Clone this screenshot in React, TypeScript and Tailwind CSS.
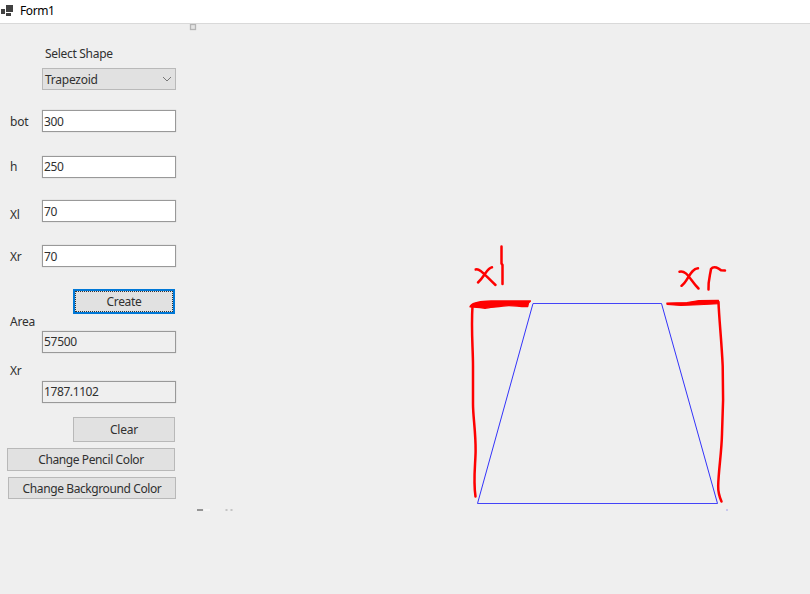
import type { ReactNode } from 'react';

const fieldBase =
  'flex h-[22px] w-[134px] items-center border border-[#999] pl-[1px] shadow-[0_0_1px_#bbb]';

function Label({ children, className = '' }: { children: ReactNode; className?: string }) {
  return <span className={`block h-4 leading-4 whitespace-nowrap ${className}`}>{children}</span>;
}

function Row({ label, value, className, labelClass = '', valueClass = '' }: { label: string; value: string; className: string; labelClass?: string; valueClass?: string }) {
  return (
    <div className={`flex h-[22px] items-center ${className}`}>
      <Label className={`w-[32px] tracking-[-0.2px] ${labelClass}`}>{label}</Label>
      <div className={`${fieldBase} bg-white`}>
        <span className={`tracking-[-0.4px] ${valueClass}`}>{value}</span>
      </div>
    </div>
  );
}

function Button({ children, className }: { children: ReactNode; className: string }) {
  return (
    <button className={`flex items-center justify-center border border-[#b8b8b8] bg-[#e1e1e1] whitespace-nowrap ${className}`}>
      {children}
    </button>
  );
}

function Drawing() {
  return (
    <svg width="621" height="570" viewBox="189 24 621 570" fill="none">
      <rect x="190.5" y="24.5" width="5" height="5" fill="#e4e4e4" stroke="#b5b5b5" strokeWidth="1.3" />
      <path d="M197 510h6" stroke="#777" strokeWidth="1.5" />
      <path d="M204 510h6" stroke="#fff" strokeWidth="1" />
      <path d="M225.5 510h2M230.5 510h2" stroke="#999" strokeWidth="1.2" />
      <path d="M726 510h2" stroke="#bbbbec" strokeWidth="1.5" />
      <path d="M533 303.5H661.5" stroke="#4444f8" />
      <path d="M477.5 503.5H717.5" stroke="#4444f8" />
      <path d="M533 303.5L477.5 503.5M661.5 303.5L717.5 503.5" stroke="#3333fa" />
      <g stroke="#fe0000" strokeWidth="2.5" strokeLinecap="round" strokeLinejoin="round">
        <path d="M475.7 269.5C480 268 485 275.5 495.5 285M492 267.3C487 268 485 276 478 282.5" />
        <path d="M501.5 246.5V263.5L502.5 265V284" />
        <path d="M679.5 271.7C687 270 690 280 698.5 288.5M698 268.3C690 268.5 688 282 681.5 285.8" />
        <path d="M708.5 289.5C708 281 710 276 711 269C714 265 719 268.5 721 270.2L725 270.6" />
        <path d="M472.5 306C471 330 473 348 473 366V404C473 417 475.8 432 475.6 451C475.5 464 473 480 475.5 496.5" />
        <path d="M718.5 302C719 318 721.5 340 722.7 366C723.5 390 723 416 722 434C721.5 454 718.5 470 718.2 486C718 493 719.5 497 721.5 501.5" />
      </g>
      <g fill="#fe0000" stroke="#fe0000" strokeLinejoin="round">
        <path d="M470.3 306C473 302 482 301.5 491 301H530.5L528.5 303L527.7 306.5C519 307 512 304.5 503 306C496 307 489 307.5 485 308.3L480 307.5L470 306.8Z" strokeWidth="1.3" />
        <path d="M666.8 303L687 302.5L699 300.6L718.5 300.2V303.8L699 304.7L681 305.4L667 304.4Z" strokeWidth="1.1" />
      </g>
    </svg>
  );
}

export default function App() {
  return (
    <div className="flex h-[594px] w-[810px] flex-col overflow-hidden bg-[#efefef] font-['Noto_Sans','Open_Sans',sans-serif] text-[12px] leading-4 text-[#303030]">
      <header className="flex h-6 shrink-0 items-start border-b border-[#d9d9d9] bg-white text-black">
        <svg className="mt-[5px] ml-px shrink-0" width="13" height="12" viewBox="1 5 13 12" fill="#414141" shapeRendering="crispEdges">
          <path d="M6 5h7v7H6zM1 9h4v5H1zM6 13h5v3H6z" />
        </svg>
        <span className="mt-[3px] ml-[6px] tracking-[-0.4px]">Form1</span>
      </header>
      <main className="flex min-h-0 flex-1">
        <aside className="w-[189px] shrink-0">
          <Label className="mt-[22px] ml-[45px] tracking-[-0.3px]">Select Shape</Label>
          <div className="mt-[6px] ml-[42px] flex h-[22px] w-[134px] items-center justify-between border border-[#b9b9b9] bg-[#e1e1e1] pr-[3px] pl-[2px]">
            <span className="translate-y-px tracking-[-0.25px]">Trapezoid</span>
            <svg width="10" height="6" viewBox="0 0 10 6" fill="none" stroke="#777">
              <path d="M1 1l4 4 4-4" />
            </svg>
          </div>
          <Row label="bot" value="300" className="mt-[20px] pl-[10px]" labelClass="translate-y-px" valueClass="translate-y-px" />
          <Row label="h" value="250" className="mt-[24px] pl-[10px]" />
          <Row label="Xl" value="70" className="mt-[22px] pl-[10px]" labelClass="translate-y-[4px]" valueClass="translate-y-px" />
          <Row label="Xr" value="70" className="mt-[23px] pl-[10px]" labelClass="translate-y-px" valueClass="translate-y-px" />
          <Button className="mt-[22px] ml-[73px] h-[25px] w-[102px] border-2 !border-[#0078d7] outline-1 -outline-offset-3 outline-dotted outline-[#333]">
            <span className="tracking-[-0.3px]">Create</span>
          </Button>
          <Label className="ml-[10px] tracking-[-0.2px]">Area</Label>
          <div className={`${fieldBase} mt-px ml-[42px]`}>
            <span className="tracking-[-0.3px]">57500</span>
          </div>
          <Label className="mt-[10px] ml-[10px] tracking-[-0.2px]">Xr</Label>
          <div className={`${fieldBase} mt-[2px] ml-[42px]`}>
            <span className="tracking-[-0.4px]">1787.1102</span>
          </div>
          <Button className="mt-[14px] ml-[73px] h-[25px] w-[102px]">
            <span className="tracking-[-0.2px]">Clear</span>
          </Button>
          <Button className="mt-[6px] ml-[7px] h-[23px] w-[168px]">
            <span className="tracking-[-0.4px]">Change Pencil Color</span>
          </Button>
          <Button className="mt-[6px] ml-[8px] h-[22px] w-[168px]">
            <span className="translate-y-px tracking-[-0.4px]">Change Background Color</span>
          </Button>
        </aside>
        <Drawing />
      </main>
    </div>
  );
}
